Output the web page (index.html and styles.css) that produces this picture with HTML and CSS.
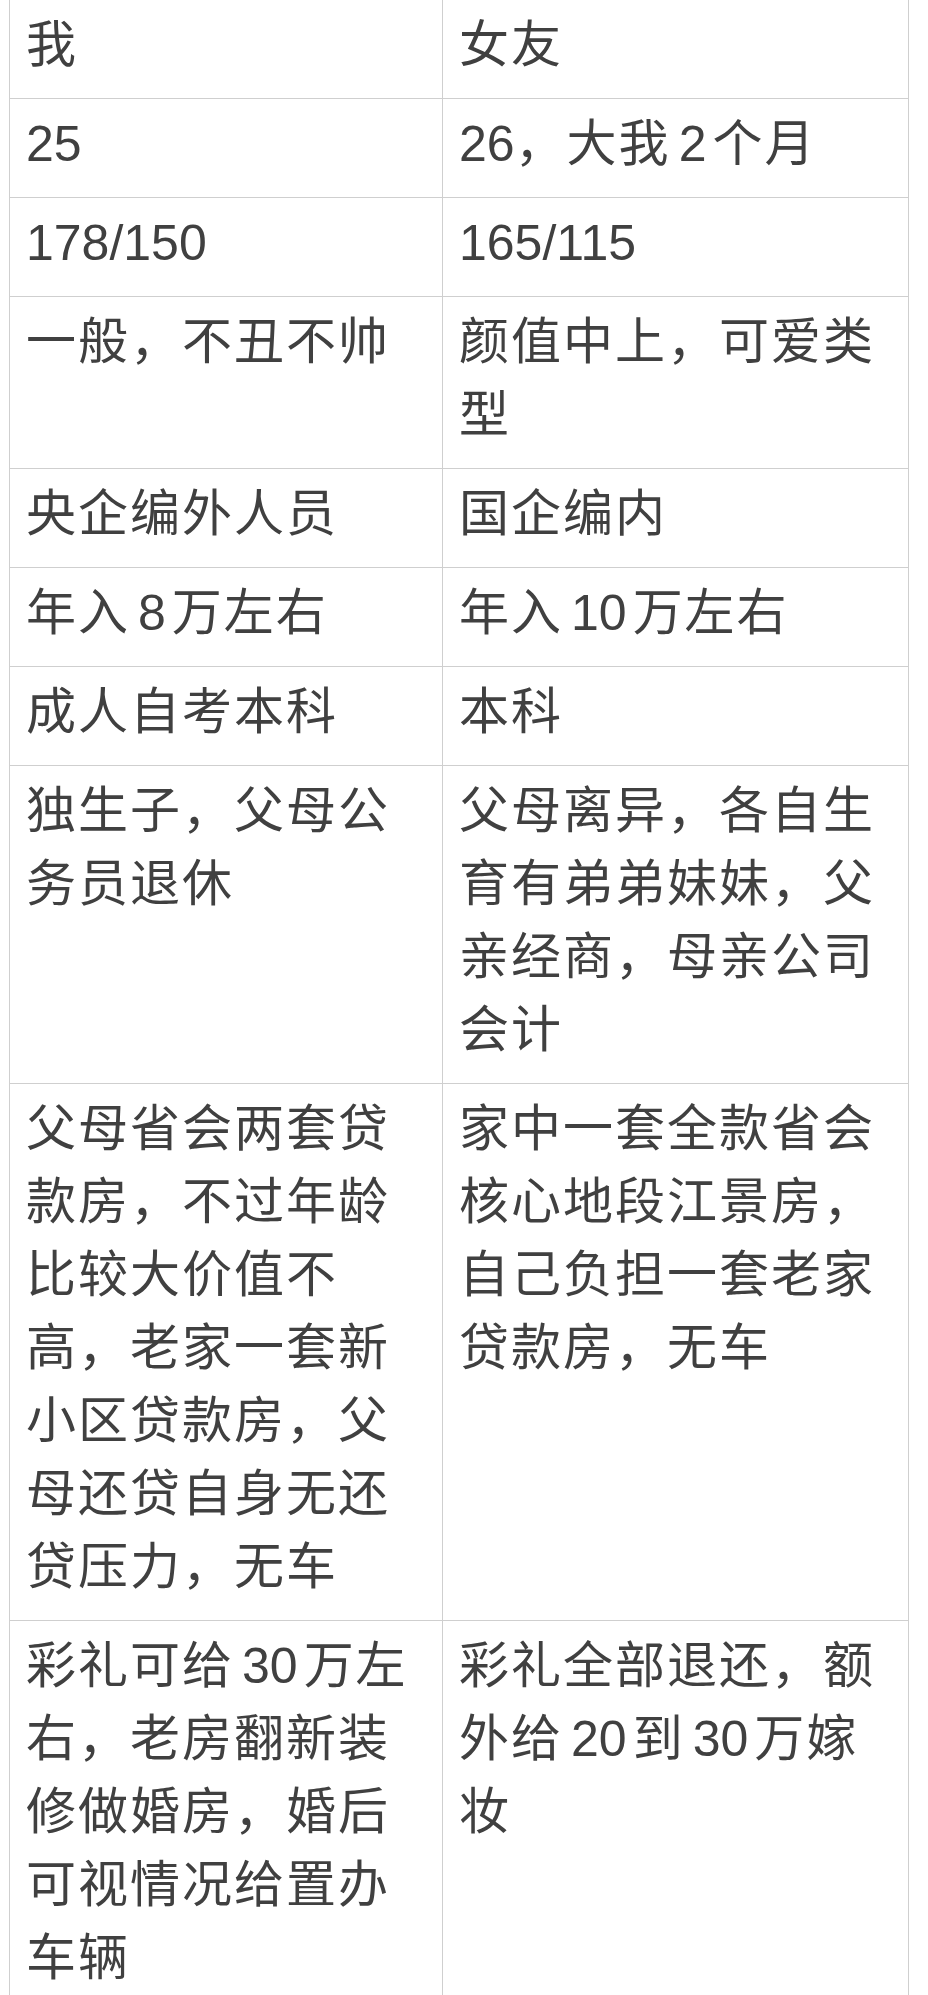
FILE: index.html
```html
<!DOCTYPE html>
<html lang="zh-CN">
<head>
<meta charset="utf-8">
<title>对比</title>
<link rel="stylesheet" href="styles.css">
</head>
<body>
<table class="compare">
  <colgroup><col class="c-me"><col class="c-her"></colgroup>
  <tbody>
    <tr><td>我</td><td>女友</td></tr>
    <tr><td><span class="n">25</span></td><td><span class="n">26</span>，大我<span class="n sp">2</span>个月</td></tr>
    <tr><td><span class="n">178/150</span></td><td><span class="n">165/115</span></td></tr>
    <tr><td>一般，不丑不帅</td><td>颜值中上，可爱类型</td></tr>
    <tr><td>央企编外人员</td><td>国企编内</td></tr>
    <tr><td>年入<span class="n sp">8</span>万左右</td><td>年入<span class="n sp">10</span>万左右</td></tr>
    <tr><td>成人自考本科</td><td>本科</td></tr>
    <tr><td>独生子，父母公务员退休</td><td>父母离异，各自生育有弟弟妹妹，父亲经商，母亲公司会计</td></tr>
    <tr><td>父母省会两套贷款房，不过年龄比较大价值不高，老家一套新小区贷款房，父母还贷自身无还贷压力，无车</td><td>家中一套全款省会核心地段江景房，自己负担一套老家贷款房，无车</td></tr>
    <tr><td>彩礼可给<span class="n sp">30</span>万左右，老房翻新装修做婚房，婚后可视情况给置办车辆</td><td>彩礼全部退还，额外给<span class="n sp">20</span>到<span class="n sp">30</span>万嫁妆</td></tr>
  </tbody>
</table>
</body>
</html>
```

FILE: styles.css
```css
html, body {
  margin: 0;
  padding: 0;
  background: #ffffff;
}

body {
  font-family: "Liberation Sans", "Noto Sans CJK SC", sans-serif;
  color: #404040;
  overflow: hidden;
}

.compare {
  margin: -1px 0 0 9px;
  width: 900px;
  table-layout: fixed;
  border-collapse: separate;
  border-spacing: 0;
  border-left: 1px solid #cfcfcf;
  border-top: 1px solid #cfcfcf;
}

.c-me {
  width: 433px;
}

.compare td {
  box-sizing: border-box;
  vertical-align: top;
  padding: 9px 12px 16px 16px;
  border-right: 1px solid #cfcfcf;
  border-bottom: 1px solid #cfcfcf;
  font-size: 50px;
  line-height: 73px;
  letter-spacing: 2px;
  word-break: break-all;
}

.n {
  letter-spacing: 0;
}

.sp {
  margin: 0 6px 0 8px;
}
```
